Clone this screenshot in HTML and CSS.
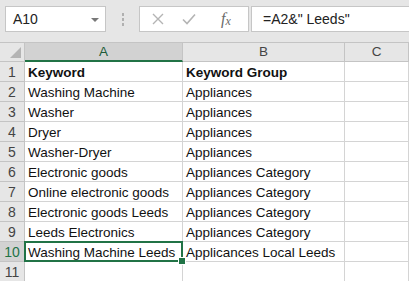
FILE: index.html
```html
<!DOCTYPE html>
<html lang="en">
<head>
  <meta charset="UTF-8" />
  <title>Keywords</title>
  <link rel="stylesheet" href="styles.css">
</head>
<body>
  <!-- Formula bar -->
  <div class="formula-bar">
    <div class="name-box">
      <span>A10</span>
      <span class="caret"></span>
    </div>
    <div class="grip"><i></i><i></i><i></i></div>
    <div class="fx-box">
      <svg class="ico" width="12" height="12" viewBox="0 0 12 12"><path d="M1 1 L11 11 M11 1 L1 11" stroke="#b4b4b4" stroke-width="1.4" fill="none"/></svg>
      <svg class="ico" width="14" height="12" viewBox="0 0 14 12"><path d="M1 6.5 L5 10.5 L13 1.5" stroke="#b4b4b4" stroke-width="1.6" fill="none"/></svg>
      <span class="fx">f<sub>x</sub></span>
    </div>
    <div class="formula">=A2&amp;" Leeds"</div>
  </div>

  <!-- Sheet -->
  <div class="sheet">
    <div class="corner"></div>
    <div class="col-head sel">A</div>
    <div class="col-head">B</div>
    <div class="col-head">C</div>

    <div class="row-head">1</div><div class="cell bold">Keyword</div><div class="cell bold">Keyword Group</div><div class="cell"></div>
    <div class="row-head">2</div><div class="cell">Washing Machine</div><div class="cell">Appliances</div><div class="cell"></div>
    <div class="row-head">3</div><div class="cell">Washer</div><div class="cell">Appliances</div><div class="cell"></div>
    <div class="row-head">4</div><div class="cell">Dryer</div><div class="cell">Appliances</div><div class="cell"></div>
    <div class="row-head">5</div><div class="cell">Washer-Dryer</div><div class="cell">Appliances</div><div class="cell"></div>
    <div class="row-head">6</div><div class="cell">Electronic goods</div><div class="cell">Appliances Category</div><div class="cell"></div>
    <div class="row-head">7</div><div class="cell">Online electronic goods</div><div class="cell">Appliances Category</div><div class="cell"></div>
    <div class="row-head">8</div><div class="cell">Electronic goods Leeds</div><div class="cell">Appliances Category</div><div class="cell"></div>
    <div class="row-head">9</div><div class="cell">Leeds Electronics</div><div class="cell">Appliances Category</div><div class="cell"></div>
    <div class="row-head sel">10</div><div class="cell active">Washing Machine Leeds</div><div class="cell">Applicances Local Leeds</div><div class="cell"></div>
    <div class="row-head">11</div><div class="cell"></div><div class="cell"></div><div class="cell"></div>
  </div>
</body>
</html>
```

FILE: styles.css
```css
/* ===== Reset ===== */
* {
  margin: 0;
  padding: 0;
  box-sizing: border-box;
}
body {
  width: 409px;
  height: 281px;
  overflow: hidden;
  background: #fff;
  font-family: 'Liberation Sans', Arial, sans-serif;
  font-size: 13.5px;
  color: #111;
}

/* ===== Formula bar ===== */
.formula-bar {
  display: flex;
  align-items: flex-start;
  height: 42px;
  padding: 6px 0 0 5px;
  background: #e6e6e6;
}
.name-box,
.fx-box,
.formula {
  height: 26px;
  background: #fff;
  border: 1px solid #c6c6c6;
  display: flex;
  align-items: center;
}
.name-box {
  width: 101px;
  padding: 0 6px 0 7px;
  justify-content: space-between;
  font-size: 14px;
  color: #222;
}
.caret {
  width: 0;
  height: 0;
  border-left: 4px solid transparent;
  border-right: 4px solid transparent;
  border-top: 4px solid #787878;
  margin-top: 1px;
}
.grip {
  width: 33px;
  display: flex;
  flex-direction: column;
  align-items: center;
  gap: 2px;
  padding-top: 7px;
}
.grip i {
  width: 2px;
  height: 3px;
  background: #b0b0b0;
}
.fx-box {
  width: 110px;
  padding-left: 12px;
}
.fx-box .ico:first-child {
  margin-right: 18px;
}
.fx {
  margin-left: 25px;
  font-family: 'Liberation Serif', serif;
  font-style: italic;
  font-size: 16px;
  color: #6a6a6a;
}
.fx sub {
  font-size: 12px;
  vertical-align: -1px;
}
.formula {
  flex: 1;
  margin-left: 2px;
  border-right: none;
  padding-left: 11px;
  font-size: 14px;
  color: #222;
}

/* ===== Sheet grid ===== */
.sheet {
  display: grid;
  grid-template-columns: 25px 158px 162px 64px;
  grid-auto-rows: 20px;
}
.corner,
.col-head,
.row-head {
  background: #e6e6e6;
  border-right: 1px solid #c4c4c4;
  border-bottom: 1px solid #c4c4c4;
  color: #444;
}
.corner {
  position: relative;
  border-top: 1px solid #c4c4c4;
}
.corner::after {
  content: "";
  position: absolute;
  right: 3px;
  bottom: 3px;
  border-left: 11px solid transparent;
  border-bottom: 11px solid #b4b4b4;
}
.col-head {
  border-top: 1px solid #c4c4c4;
  text-align: center;
  line-height: 18px;
  font-size: 13.5px;
}
.col-head.sel {
  background: #d2d2d2;
  border-bottom: 2px solid #217346;
  color: #1f5c3a;
}
.row-head {
  text-align: center;
  line-height: 20px;
  font-size: 14px;
}
.row-head.sel {
  background: #d2d2d2;
  color: #217346;
}
.cell {
  border-right: 1px solid #d4d4d4;
  border-bottom: 1px solid #d4d4d4;
  padding: 0 3px;
  line-height: 21px;
  white-space: nowrap;
  overflow: visible;
}
.bold {
  font-weight: bold;
}

/* active cell */
.cell.active {
  position: relative;
}
.cell.active::before {
  content: "";
  position: absolute;
  inset: -1px;
  border: 2px solid #217346;
  z-index: 1;
}
.cell.active::after {
  content: "";
  position: absolute;
  right: -4px;
  bottom: -4px;
  width: 6px;
  height: 6px;
  background: #217346;
  border: 1px solid #fff;
  z-index: 2;
}
```
